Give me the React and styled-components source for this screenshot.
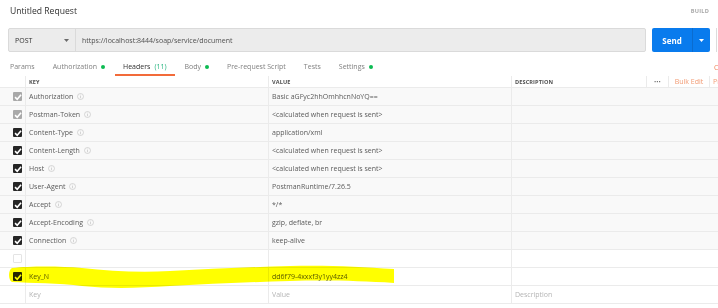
import React from 'react';
import { styled, createGlobalStyle } from "styled-components";

const GlobalStyle = createGlobalStyle`
    html, body {
        margin: 0;
        padding: 0;
        background: #ffffff;
        overflow: hidden;
    }
    body {
        font-family: "Open Sans", "Noto Sans", sans-serif;
    }
`;

//헤더 목록 데이터
const headers = [
    { key: "Authorization", value: "Basic aGFyc2hhOmhhcnNoYQ==", auto: true, locked: true },
    { key: "Postman-Token", value: "<calculated when request is sent>", auto: true, locked: true },
    { key: "Content-Type", value: "application/xml", auto: true },
    { key: "Content-Length", value: "<calculated when request is sent>", auto: true },
    { key: "Host", value: "<calculated when request is sent>", auto: true },
    { key: "User-Agent", value: "PostmanRuntime/7.26.5", auto: true },
    { key: "Accept", value: "*/*", auto: true },
    { key: "Accept-Encoding", value: "gzip, deflate, br", auto: true },
    { key: "Connection", value: "keep-alive", auto: true },
    { key: "", value: "", empty: true },
    { key: "Key_N", value: "dd6f79-4xxxf3y1yy4zz4" },
];

const tabs = [
    { label: "Params" },
    { label: "Authorization", dot: true },
    { label: "Headers", count: "(11)", active: true },
    { label: "Body", dot: true },
    { label: "Pre-request Script" },
    { label: "Tests" },
    { label: "Settings", dot: true },
];

const InfoIcon = () => (
    <svg width="7" height="7" viewBox="0 0 14 14">
        <circle cx="7" cy="7" r="6" fill="none" stroke="#c4c4c4" strokeWidth="1.3" />
        <line x1="7" y1="6" x2="7" y2="10.5" stroke="#c4c4c4" strokeWidth="1.4" />
        <circle cx="7" cy="4" r="0.9" fill="#c4c4c4" />
    </svg>
);

const Check = () => (
    <svg width="8" height="8" viewBox="0 0 10 10">
        <path d="M1.3 5.2 L4 7.8 L8.8 2.2" fill="none" stroke="#ffffff" strokeWidth="2" />
    </svg>
);

const Caret = ({ color }) => (
    <svg width="5" height="3" viewBox="0 0 10 6">
        <path d="M0 0 L10 0 L5 6 Z" fill={color} />
    </svg>
);

const HeaderRow = ({ item }) => (
    <Row $shaded={item.auto}>
        <CheckCell>
            {item.empty ? <EmptyBox /> : <Box $locked={item.locked}><Check /></Box>}
        </CheckCell>
        <Cell>
            {item.key && <KeyText>{item.key}</KeyText>}
            {item.auto && <InfoIcon />}
        </Cell>
        <Cell>{item.value && <KeyText>{item.value}</KeyText>}</Cell>
        <Cell $last />
    </Row>
);

const App = () => {
    return (
        <>
            <GlobalStyle />
            <Page>
                <TopBar>
                    <Title>Untitled Request</Title>
                    <Build>BUILD</Build>
                </TopBar>

                <UrlRow>
                    <UrlBox>
                        <Method>
                            POST
                            <Caret color="#6a6a6a" />
                        </Method>
                        <UrlText>https://localhost:8444/soap/service/document</UrlText>
                    </UrlBox>
                    <SendGroup>
                        <SendLabel>Send</SendLabel>
                        <SendCaret><Caret color="#ffffff" /></SendCaret>
                    </SendGroup>
                    <SaveEdge />
                </UrlRow>

                <TabRow>
                    {tabs.map(tab => (
                        <Tab key={tab.label} $active={tab.active}>
                            {tab.label}
                            {tab.count && <Count>{tab.count}</Count>}
                            {tab.dot && <Dot />}
                        </Tab>
                    ))}
                    <SideLink>Cookies</SideLink>
                </TabRow>

                <Table>
                    <HeadRow>
                        <CheckCell $head />
                        <Cell $head><HeadText>KEY</HeadText></Cell>
                        <Cell $head><HeadText>VALUE</HeadText></Cell>
                        <Cell $head $last>
                            <HeadText>DESCRIPTION</HeadText>
                            <Tools>
                                <Tool $w={22}>•••</Tool>
                                <Tool $w={41} $orange>Bulk Edit</Tool>
                                <Tool $w={9} $orange $clip>Presets</Tool>
                            </Tools>
                        </Cell>
                    </HeadRow>
                    {headers.map((item, i) => (
                        <HeaderRow key={i} item={item} />
                    ))}
                    <Row>
                        <CheckCell />
                        <Cell><Placeholder>Key</Placeholder></Cell>
                        <Cell><Placeholder>Value</Placeholder></Cell>
                        <Cell $last><Placeholder>Description</Placeholder></Cell>
                    </Row>
                </Table>

                {/* 형광펜 표시 */}
                <Highlight viewBox="0 0 718 308" width="718" height="308">
                    <path
                        d="M12 268 C30 266 60 266 82 268 C110 271 140 273 170 271 C210 269 250 267 290 266 C330 265 360 267 394 269 L394 283 C360 281 330 280 290 281 C250 282 210 284 170 286 C140 288 110 289 82 286 C60 283 30 283 12 282 C8 280 8 270 12 268 Z"
                        fill="#ffff00"
                    />
                </Highlight>
            </Page>
        </>
    );
};

export default App;

//styled
const Page = styled.div`
    position: relative;
    width: 718px;
    height: 308px;
    overflow: hidden;
    color: #505050;
`;

const TopBar = styled.div`
    display: flex;
    align-items: center;
    justify-content: space-between;
    height: 21px;
    padding: 0 9px 0 10px;
`;

const Title = styled.div`
    font-size: 8.6px;
    color: #303030;
`;

const Build = styled.div`
    font-size: 5.6px;
    font-weight: 700;
    color: #a8a8a8;
    letter-spacing: 0.2px;
`;

const UrlRow = styled.div`
    display: flex;
    height: 24px;
    margin-top: 7px;
    padding-left: 8px;
`;

const UrlBox = styled.div`
    display: flex;
    flex-shrink: 0;
    width: 638px;
    box-sizing: border-box;
    background: #ececec;
    border: 1px solid #dadada;
    border-radius: 2px;
`;

const Method = styled.div`
    display: flex;
    align-items: center;
    justify-content: space-between;
    width: 67px;
    box-sizing: border-box;
    padding: 0 6px 0 6px;
    border-right: 1px solid #dadada;
    font-size: 7px;
    color: #303030;
`;

const UrlText = styled.div`
    display: flex;
    align-items: center;
    padding-left: 6px;
    font-size: 7px;
    color: #505050;
`;

const SendGroup = styled.div`
    display: flex;
    flex-shrink: 0;
    width: 58px;
    margin-left: 6px;
    background: #097bed;
    border-radius: 2px;
`;

const SendLabel = styled.div`
    flex: 1;
    display: flex;
    align-items: center;
    justify-content: center;
    font-size: 8px;
    font-weight: 700;
    color: #ffffff;
    border-right: 1px solid #0b6ccf;
`;

const SendCaret = styled.div`
    display: flex;
    align-items: center;
    justify-content: center;
    width: 17px;
`;

const SaveEdge = styled.div`
    flex-shrink: 0;
    margin-left: 6px;
    width: 6px;
    border-left: 1px solid #dcdcdc;
`;

const TabRow = styled.div`
    display: flex;
    height: 17px;
    margin-top: 7px;
    padding-left: 2px;
    gap: 2px;
`;

const Tab = styled.div`
    display: flex;
    align-items: center;
    gap: 2px;
    height: 17px;
    box-sizing: border-box;
    padding: 0 8px 0 8px;
    font-size: 7px;
    color: ${p => p.$active ? "#303030" : "#808080"};
    border-bottom: 2px solid ${p => p.$active ? "#f26b3a" : "transparent"};
    white-space: nowrap;
`;

const Count = styled.span`
    margin-left: 2px;
    color: #26b47f;
`;

const Dot = styled.span`
    width: 4px;
    height: 4px;
    margin-left: 2px;
    border-radius: 50%;
    background: #0cbb52;
`;

const SideLink = styled.div`
    margin-left: auto;
    width: 4px;
    display: flex;
    align-items: center;
    font-size: 7px;
    color: #f0865a;
    white-space: nowrap;
`;

const Table = styled.div`
    display: flex;
    flex-direction: column;
`;

const Row = styled.div`
    display: grid;
    grid-template-columns: 26px 243px 243px 1fr;
    height: 18px;
    box-sizing: border-box;
    border-bottom: 1px solid #ebebeb;
    background: ${p => p.$shaded ? "#f9f9f9" : "#ffffff"};
`;

const HeadRow = styled(Row)`
    height: 12px;
`;

const CheckCell = styled.div`
    display: flex;
    align-items: center;
    justify-content: flex-end;
    padding-right: 3px;
    border-right: 1px solid #ebebeb;
`;

const Cell = styled.div`
    display: flex;
    align-items: center;
    gap: 4px;
    min-width: 0;
    padding-left: 3px;
    border-right: ${p => p.$last ? "none" : "1px solid #ebebeb"};
`;

const Box = styled.div`
    display: flex;
    align-items: center;
    justify-content: center;
    width: 9px;
    height: 9px;
    border-radius: 1px;
    background: ${p => p.$locked ? "#a9a9a9" : "#262626"};
`;

const EmptyBox = styled.div`
    width: 9px;
    height: 9px;
    box-sizing: border-box;
    border-radius: 1px;
    border: 1px solid #e4e4e4;
    background: #ffffff;
`;

const KeyText = styled.span`
    font-size: 7px;
    color: #5a5a5a;
    white-space: nowrap;
`;

const Placeholder = styled.span`
    font-size: 7px;
    color: #b4b4b4;
`;

const HeadText = styled.span`
    font-size: 5.6px;
    font-weight: 700;
    color: #505050;
    letter-spacing: 0.1px;
`;

const Tools = styled.div`
    display: flex;
    flex-shrink: 0;
    align-self: stretch;
    margin-left: auto;
`;

const Tool = styled.div`
    display: flex;
    align-items: center;
    justify-content: ${p => p.$clip ? "flex-start" : "center"};
    box-sizing: border-box;
    width: ${p => p.$w}px;
    padding-left: ${p => p.$clip ? "3px" : "0"};
    border-left: 1px solid #ebebeb;
    font-size: ${p => p.$orange ? "7px" : "6px"};
    color: ${p => p.$orange ? "#f29b74" : "#707070"};
    white-space: nowrap;
    overflow: visible;
`;

const Highlight = styled.svg`
    position: absolute;
    left: 0;
    top: 0;
    pointer-events: none;
    mix-blend-mode: multiply;
`;
